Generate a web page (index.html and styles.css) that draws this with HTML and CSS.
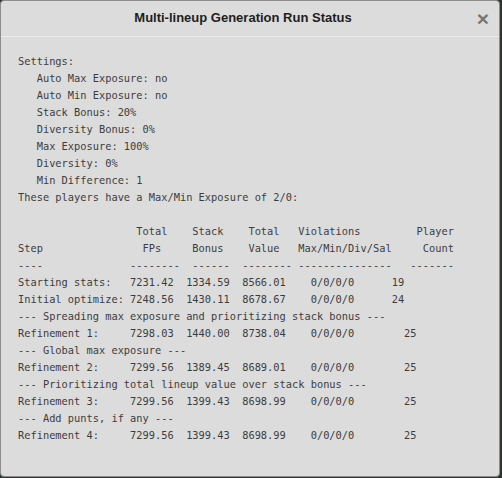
FILE: index.html
```html
<!DOCTYPE html>
<html>
<head>
<meta charset="utf-8">
<link rel="stylesheet" href="styles.css">
</head>
<body>
<div class="dialog">
  <div class="header">
    <div class="title">Multi-lineup Generation Run Status</div>
    <span class="close">&times;</span>
  </div>
  <div class="body">
<pre class="log">Settings:
   Auto Max Exposure: no
   Auto Min Exposure: no
   Stack Bonus: 20%
   Diversity Bonus: 0%
   Max Exposure: 100%
   Diversity: 0%
   Min Difference: 1
These players have a Max/Min Exposure of 2/0:

                   Total    Stack    Total   Violations         Player
Step                FPs     Bonus    Value   Max/Min/Div/Sal     Count
----              --------  ------  -------- ---------------   -------
Starting stats:   7231.42  1334.59  8566.01    0/0/0/0      19
Initial optimize: 7248.56  1430.11  8678.67    0/0/0/0      24
--- Spreading max exposure and prioritizing stack bonus ---
Refinement 1:     7298.03  1440.00  8738.04    0/0/0/0        25
--- Global max exposure ---
Refinement 2:     7299.56  1389.45  8689.01    0/0/0/0        25
--- Prioritizing total lineup value over stack bonus ---
Refinement 3:     7299.56  1399.43  8698.99    0/0/0/0        25
--- Add punts, if any ---
Refinement 4:     7299.56  1399.43  8698.99    0/0/0/0        25</pre>
  </div>
</div>
</body>
</html>
```
FILE: styles.css
```css
html, body {
  margin: 0;
  padding: 0;
  background: #2b3630;
}
.dialog {
  width: 500px;
  height: 477px;
  box-sizing: border-box;
  background: #dcdcdc;
  border: 1px solid #8c8c8c;
  border-radius: 4px;
  display: flex;
  flex-direction: column;
}
.header {
  height: 36px;
  box-sizing: border-box;
  border-bottom: 1px solid #ececec;
  display: flex;
  align-items: center;
  justify-content: center;
  position: relative;
}
.title {
  font-family: "Liberation Sans", Arial, sans-serif;
  font-weight: bold;
  font-size: 13px;
  color: #1e1e1e;
  margin-right: 14px;
  margin-top: -3px;
}
.close {
  position: absolute;
  right: 10px;
  top: 6px;
  font-family: "Liberation Sans", Arial, sans-serif;
  font-weight: bold;
  font-size: 21px;
  color: #777;
}
.body {
  padding: 16px 0 0 17px;
}
.log {
  margin: 0;
  font-family: "DejaVu Sans Mono", monospace;
  font-size: 10.35px;
  line-height: 17px;
  color: #3c3c3c;
}
```
